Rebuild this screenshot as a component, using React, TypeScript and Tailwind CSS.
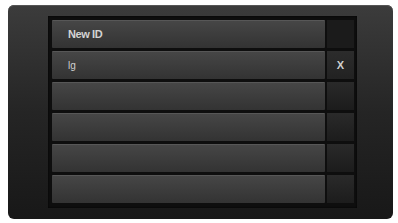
const rows = ['New ID', 'lg', '', '', '', ''];

export default function App() {
  return (
    <div className="w-[398px] h-[223px] bg-white pt-[5px] pl-[8px]" style={{ fontFamily: '"Liberation Sans", Arial, sans-serif' }}>
      <div className="w-[385px] h-[214px] rounded-[6px] bg-gradient-to-b from-[#3c3c3c] via-[#252525] to-[#181818] pt-[11px] pl-[40px] shadow-[inset_0_1px_0_#555]">
        <div className="w-[309px] h-[192px] bg-[#0e0e0e] p-[4px] pr-[3px] flex flex-col gap-[3px] shadow-[inset_0_0_2px_#000]">
          {rows.map((label, i) => (
            <div key={i} className="flex gap-[2px] h-[28px]">
              <div className="flex-1 flex items-center pl-[16px] bg-gradient-to-b from-[#464646] to-[#333] border-t border-[#575757] rounded-[1px]">
                {i === 0 && <span className="text-[11px] font-semibold text-[#d4d4d4] tracking-[-0.4px]">{label}</span>}
                {i === 1 && <span className="text-[10px] text-[#d0d0d0]">{label}</span>}
              </div>
              <div
                className={
                  'w-[27px] flex items-center justify-center ' +
                  (i === 0 ? 'bg-[#1b1b1b]' : i === 1 ? 'bg-gradient-to-b from-[#2c2c2c] to-[#222]' : 'bg-gradient-to-b from-[#2a2a2a] to-[#1c1c1c]')
                }
              >
                {i === 1 && <span className="text-[11px] font-bold text-[#cfcfcf]">X</span>}
              </div>
            </div>
          ))}
        </div>
      </div>
    </div>
  );
}
